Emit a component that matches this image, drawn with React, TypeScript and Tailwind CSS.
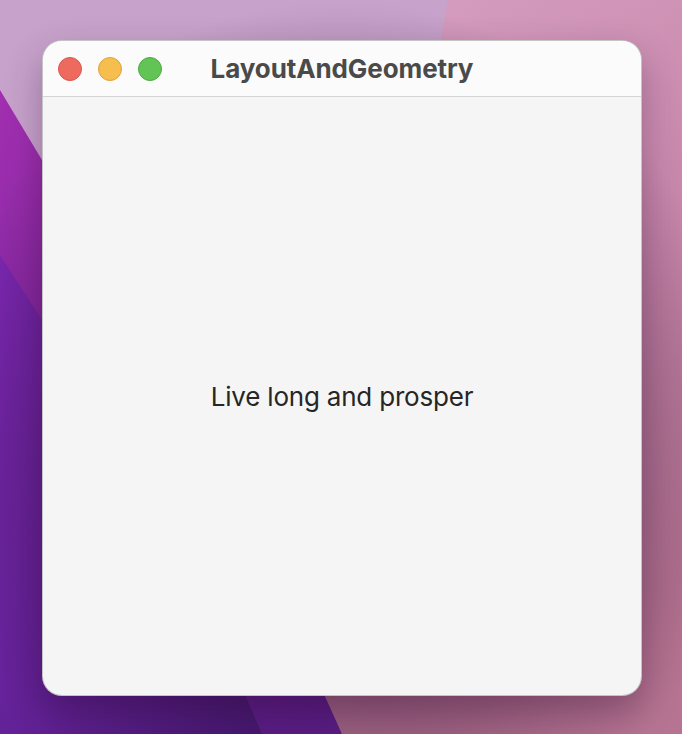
import React from 'react';

const LIGHTS = [
  { bg: 'bg-[#ee6a5f]', ring: 'border-[#d9574c]' },
  { bg: 'bg-[#f6be4f]', ring: 'border-[#dea23b]' },
  { bg: 'bg-[#61c454]', ring: 'border-[#4eaa40]' },
];

function Wallpaper() {
  return (
    <svg className="absolute inset-0 w-full h-full" viewBox="0 0 682 734" preserveAspectRatio="none">
      <defs>
        <linearGradient id="pink" x1="0" y1="0" x2="0.3" y2="1">
          <stop offset="0" stopColor="#d7a0c2" />
          <stop offset="0.5" stopColor="#c888ac" />
          <stop offset="1" stopColor="#b67492" />
        </linearGradient>
        <linearGradient id="band" x1="0" y1="0" x2="0" y2="1">
          <stop offset="0" stopColor="#a22fb0" />
          <stop offset="1" stopColor="#65229a" />
        </linearGradient>
        <linearGradient id="deep" x1="0" y1="0" x2="1" y2="1">
          <stop offset="0" stopColor="#7c28b2" />
          <stop offset="1" stopColor="#4c1c7e" />
        </linearGradient>
        <radialGradient id="shade" cx="0.5" cy="0.6" r="0.6">
          <stop offset="0.55" stopColor="#2a0a30" stopOpacity="0.3" />
          <stop offset="1" stopColor="#2a0a30" stopOpacity="0" />
        </radialGradient>
      </defs>
      <rect width="682" height="734" fill="#c7a2cb" />
      <polygon points="448,0 682,0 682,734 342,734 322,696" fill="url(#pink)" />
      <polygon points="0,90 42,160 200,420 342,734 0,734" fill="url(#band)" />
      <polygon points="0,255 42,320 170,520 262,734 0,734" fill="url(#deep)" />
      <rect width="682" height="734" fill="url(#shade)" />
    </svg>
  );
}

export default function App() {
  return (
    <div className="relative w-[682px] h-[734px] overflow-hidden" style={{ fontFamily: 'Inter, "Liberation Sans", sans-serif' }}>
      <Wallpaper />
      <div className="relative pt-[40px] pl-[42px]">
        <div className="w-[600px] h-[656px] rounded-[20px] overflow-hidden bg-[#f5f5f5] border border-black/20 shadow-[0_16px_36px_rgba(40,0,40,0.3)] flex flex-col">
          {/* Title bar */}
          <div className="h-[56px] shrink-0 bg-[#fbfbfb] border-b border-[#d4d4d4] grid grid-cols-[1fr_auto_1fr] items-center">
            <div className="flex items-center gap-4 pl-[15px]">
              {LIGHTS.map((l, i) => (
                <span key={i} className={`w-6 h-6 rounded-full border ${l.bg} ${l.ring}`} />
              ))}
            </div>
            <h1 className="text-[26px] font-bold text-[#4a4a4a] tracking-[-0.1px]">LayoutAndGeometry</h1>
            <div />
          </div>

          {/* Content */}
          <div className="flex-1 flex items-center justify-center">
            <p className="text-[26px] text-[#262626] tracking-[-0.2px]">Live long and prosper</p>
          </div>
        </div>
      </div>
    </div>
  );
}
